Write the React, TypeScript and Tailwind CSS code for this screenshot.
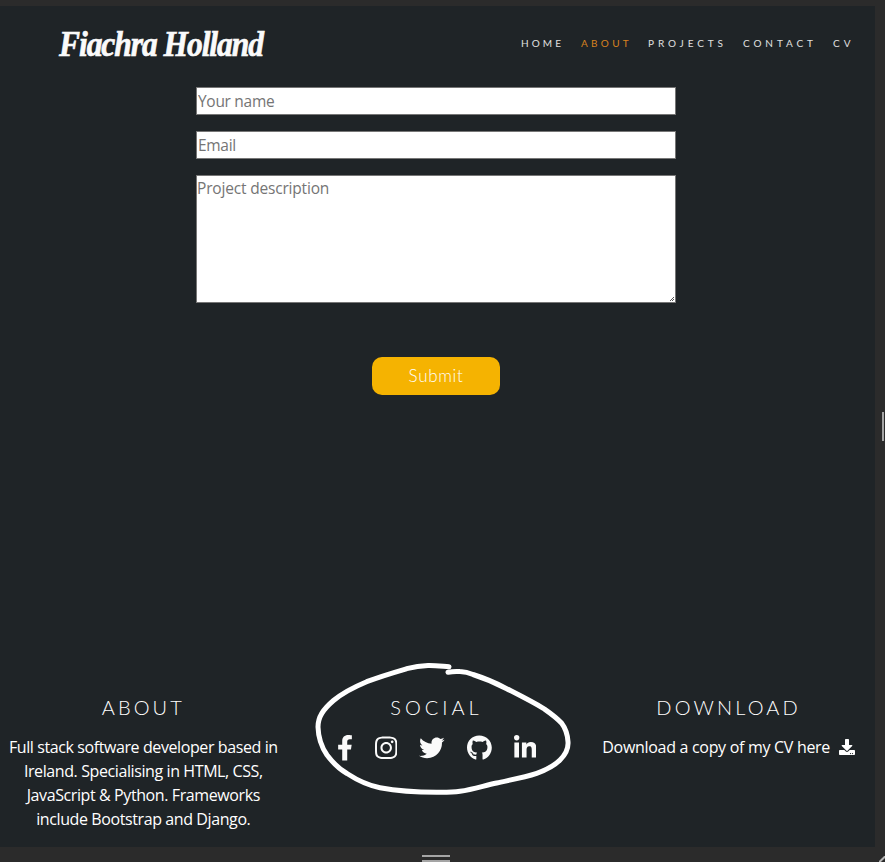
import type { ReactNode } from 'react';
import { FaFacebookF, FaInstagram, FaTwitter, FaGithub, FaLinkedinIn, FaDownload } from 'react-icons/fa';

function FooterHeading({ children }: { children: ReactNode }) {
  return (
    <h2 className="-mt-px h-[25px] whitespace-nowrap font-['Lato',sans-serif] text-[20px] font-light leading-6 text-white">
      {children}
    </h2>
  );
}

export default function App() {
  return (
    <div className="relative flex h-[862px] w-[885px] flex-col overflow-hidden bg-[#2b2b2b] pt-[6px] font-['Open_Sans','Noto_Sans',sans-serif]">
      <main className="flex h-[841px] w-[875px] flex-col bg-[#1f2427]">
        <header className="flex h-[76px] shrink-0 items-center justify-between pl-[59px]">
          <h1 className="origin-left scale-x-[0.875] whitespace-nowrap font-['Liberation_Serif',serif] text-[36px] font-bold italic leading-none tracking-[-1.2px] text-[#fafafa] [-webkit-text-stroke:0.7px_#fafafa]">
            Fiachra Holland
          </h1>
          <nav className="-mt-[2px] flex w-[354px] shrink-0 whitespace-nowrap font-['Lato',sans-serif] text-[10px] leading-4 text-[#e0e0e0]">
            <a className="w-[60px] tracking-[3.1px]">HOME</a>
            <a className="w-[67px] tracking-[3.3px] text-[#d7821f]">ABOUT</a>
            <a className="w-[95px] tracking-[3.9px]">PROJECTS</a>
            <a className="w-[90px] tracking-[3.9px]">CONTACT</a>
            <a className="tracking-[4px]">CV</a>
          </nav>
        </header>

        <form className="ml-[196px] mt-[5px] flex w-[480px] flex-col">
          <input
            className="h-7 border border-[#767676] bg-white px-px text-[15.5px] tracking-[-0.3px] placeholder:text-[#757575]"
            placeholder="Your name"
          />
          <input
            className="mt-4 h-7 border border-[#767676] bg-white px-px text-[15.5px] tracking-[-0.3px] placeholder:text-[#757575]"
            placeholder="Email"
          />
          <div className="relative mt-4 flex h-32">
            <textarea
              className="h-32 w-full resize-none border border-[#767676] bg-white text-[15.5px] leading-6 tracking-[-0.18px] placeholder:text-[#757575]"
              placeholder="Project description"
            />
            <svg className="absolute bottom-[2px] right-[2px] size-[4px]" viewBox="0 0 4 4" fill="#555" shapeRendering="crispEdges">
              <path d="M3 0h1v1H3zM2 1h1v1H2zM1 2h1v1H1zM0 3h1v1H0zM3 2h1v1H3zM2 3h1v1H2z" />
            </svg>
          </div>
          <button
            type="button"
            className="mt-[54px] h-[38px] w-32 self-center rounded-[10px] bg-[#f5b301] pb-px font-['Lato',sans-serif] text-[17px] font-light tracking-[0.65px] text-white"
          >
            Submit
          </button>
        </form>

        <footer className="mt-auto grid h-[151px] grid-cols-3 text-[#fafafa]">
          <section className="flex flex-col items-center pr-[5px]">
            <FooterHeading>
              <span className="tracking-[3.1px]">ABOUT</span>
            </FooterHeading>
            <p className="mt-[15px] whitespace-nowrap text-center text-[16px] leading-6 tracking-[-0.4px] text-white">
              Full stack software developer based in
              <br />
              Ireland. Specialising in HTML, CSS,
              <br />
              JavaScript &amp; Python. Frameworks
              <br />
              include Bootstrap and Django.
            </p>
          </section>
          <section className="flex flex-col items-center pr-[2px]">
            <FooterHeading>
              <span className="tracking-[4px]">SOCIAL</span>
            </FooterHeading>
            <div className="mt-[16px] flex h-6 items-center gap-[22px] text-[25.6px]">
              <FaFacebookF className="w-4" />
              <FaInstagram className="w-[22.4px]" />
              <FaTwitter />
              <FaGithub className="w-[24.8px]" />
              <FaLinkedinIn className="w-[22.4px]" />
            </div>
          </section>
          <section className="flex flex-col items-center pr-px">
            <FooterHeading>
              <span className="tracking-[3.15px]">DOWNLOAD</span>
            </FooterHeading>
            <p className="mt-[15px] flex items-center gap-[9px] whitespace-nowrap text-[16px] leading-6 tracking-[-0.3px] text-white">
              Download a copy of my CV here
              <FaDownload className="size-4" />
            </p>
          </section>
        </footer>
      </main>

      <div className="mt-2 ml-[422px] h-[7px] w-7 border-y-2 border-[#a5a5a5]" />
      <div className="absolute left-[882px] top-[412px] h-[29px] w-[2px] bg-[#a5a5a5]" />
      <svg className="absolute bottom-0 right-0 size-[6px]" viewBox="0 0 6 6" stroke="#b5b5b5" strokeWidth="2">
        <path d="M0 6.5 6.5 0" />
      </svg>
      <svg
        className="pointer-events-none absolute left-[310px] top-[655px] h-[145px] w-[270px]"
        viewBox="310 655 270 145"
        fill="none"
        stroke="#fff"
        strokeWidth="5"
        strokeLinecap="round"
        strokeLinejoin="round"
      >
        <path d="M449 666.7C442 666.2 435 665.3 428 665.5C420 665.7 413 667 406.7 668.7C392 673 380 676.5 366.7 681.7C354 687 343 692.5 333.5 700.5C323 709.5 318 717 318 727C318.3 737 321.5 747 327 755C333 763 339 769 347 773.5C357 780 368 785.5 380 787.7C398 791 418 792.2 436.7 792.3C445 792.3 452 792.5 460 791.3C473 789.5 484 785.7 496.7 783C510 780 524 777.5 536.7 773.3C546 770 554 766 560 760C566 754 568.5 748 568 741.7C567.5 734 566 729 561.7 723.3C556 717 550 713 543.3 708.3C531 701 519 695 506.7 688.7C496 683 484 678 473 674.5C468 672.5 464 671.8 460 671.6C455 671.2 452 671.5 448 672.3" />
      </svg>
    </div>
  );
}
